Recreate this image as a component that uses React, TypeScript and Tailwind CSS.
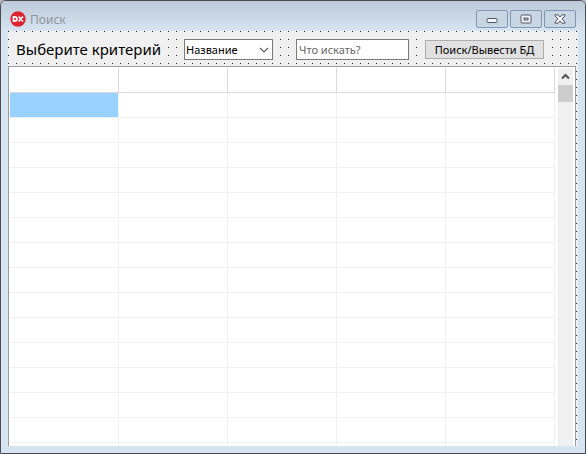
import React from "react";

const ROWS = 15;
const COLS = 5;

function CaptionButton({ label, children }: { label: string; children: React.ReactNode }) {
  return (
    <button
      type="button"
      aria-label={label}
      className="flex h-[18px] w-8 items-center justify-center rounded-[2px] border border-[#8595b4] bg-[#c8d5e3]"
    >
      {children}
    </button>
  );
}

function TitleBar() {
  return (
    <header className="flex h-[30px] shrink-0 items-center bg-linear-to-b from-[#bccad9] to-[#d7e4f1] pt-[6px] pr-[9px] pl-[9px]">
      <svg width="16" height="16" viewBox="0 0 16 16" aria-hidden="true" className="shrink-0">
        <circle cx="8" cy="8" r="7.7" fill="#dc2430" />
        <path
          d="M3.500 5.900v4.200h.9c1.500 0 2.600-.6 2.600-2.100s-1.100-2.100-2.600-2.100zM8.700 5.500l4.300 5M13 5.500l-4.300 5"
          fill="none"
          stroke="#fff"
          strokeWidth="1.700"
        />
      </svg>
      <h1 className="ml-1 flex-1 pt-px text-[12px] leading-4 text-[#8d949c]">Поиск</h1>
      <div className="flex gap-[2px]">
        <CaptionButton label="Свернуть">
          <svg width="12" height="12" viewBox="0 0 12 12" aria-hidden="true">
            <rect x="1" y="5.500" width="10" height="4" rx="1" fill="#f6f6f8" stroke="#505668" />
          </svg>
        </CaptionButton>
        <CaptionButton label="Развернуть">
          <svg width="12" height="10" viewBox="0 0 12 10" aria-hidden="true">
            <rect x="1" y="1" width="10" height="8" rx="1" fill="#f6f6f8" stroke="#505668" />
            <rect x="4" y="4" width="4" height="2" fill="#c4d1e0" stroke="#505668" />
          </svg>
        </CaptionButton>
        <CaptionButton label="Закрыть">
          <svg width="12" height="10" viewBox="0 0 12 10" aria-hidden="true">
            <path
              d="M1 .8h3L6 3 8 .8h3v1L8 5l3 3.200v1H8L6 7 4 9.200H1v-1L4 5 1 1.800z"
              fill="#f6f6f8"
              stroke="#505668"
              strokeLinejoin="round"
            />
          </svg>
        </CaptionButton>
      </div>
    </header>
  );
}

function SearchBar() {
  return (
    <form className="flex h-[35px] shrink-0 items-start pt-2 pl-2" onSubmit={(e) => e.preventDefault()}>
      <label
        htmlFor="criterion"
        className="h-[21px] w-[147px] shrink-0 bg-[#f0f0f0] text-[15px] leading-[21px] whitespace-nowrap text-black"
      >
        Выберите критерий
      </label>
      <div className="relative ml-[21px] shrink-0">
        <select
          id="criterion"
          className="block h-[21px] w-[89px] appearance-none border border-[#7a7a7a] bg-white pl-px text-[11px] leading-[19px] text-black"
        >
          <option>Название</option>
        </select>
        <svg
          width="10"
          height="6"
          viewBox="0 0 10 6"
          aria-hidden="true"
          className="pointer-events-none absolute top-2 right-1"
        >
          <path d="M1 1l4 4 4-4" fill="none" stroke="#555" strokeWidth="1.1" />
        </svg>
      </div>
      <input
        type="text"
        aria-label="Что искать?"
        placeholder="Что искать?"
        className="ml-[23px] h-[21px] w-[113px] shrink-0 border border-[#7a7a7a] bg-white px-[2px] text-[11px] text-black placeholder:text-[#666]"
      />
      <div className="ml-[15px] shrink-0 bg-[#f0f0f0] p-px">
        <button
          type="submit"
          className="block h-[19px] w-[119px] border border-[#adadad] bg-[#e1e1e1] text-[11px] leading-[17px] whitespace-nowrap text-black"
        >
          Поиск/Вывести БД
        </button>
      </div>
    </form>
  );
}

function ResultsTable() {
  return (
    <table className="w-full table-fixed border-separate border-spacing-0">
      <thead>
        <tr>
          {Array.from({ length: COLS }, (_, c) => (
            <th key={c} scope="col" className="h-[25px] border-r border-b border-[#d9d9d9] p-0" />
          ))}
        </tr>
      </thead>
      <tbody>
        {Array.from({ length: ROWS }, (_, r) => (
          <tr key={r}>
            {Array.from({ length: COLS }, (_, c) => (
              <td
                key={c}
                className={
                  r === 0 && c === 0
                    ? "h-[25px] border-r border-b border-[#f0f0f0] bg-[#99d1ff] bg-clip-padding p-0"
                    : "h-[25px] border-r border-b border-[#f0f0f0] p-0"
                }
              />
            ))}
          </tr>
        ))}
      </tbody>
    </table>
  );
}

export default function App() {
  return (
    <div className="h-screen bg-[#b9b9b9] font-['Noto_Sans','Open_Sans',sans-serif]">
      <div className="flex h-full flex-col overflow-hidden rounded-t-[6px] border border-[#4b4a50] bg-[#d7e4f1]">
        <TitleBar />
        <main className="mx-[7px] mb-[7px] flex min-h-0 flex-1 flex-col bg-[#f0f0f0] bg-[conic-gradient(from_270deg_at_1px_1px,#222_90deg,transparent_0)] bg-size-[8px_8px]">
          <SearchBar />
          <section className="mr-[2px] flex min-h-0 flex-1 overflow-hidden border-x border-t border-[#9a9a9a] bg-white pt-px pl-px">
            <div className="mr-[3px] min-w-0 flex-1">
              <ResultsTable />
            </div>
            <div className="mr-[2px] flex w-[15px] flex-col bg-[#f0f0f0]">
              <button type="button" aria-label="Вверх" className="flex h-[17px] items-center justify-center">
                <svg width="9" height="7" viewBox="0 0 9 7" aria-hidden="true">
                  <path d="M1 5.500l3.500-3.500L8 5.500" fill="none" stroke="#505050" strokeWidth="2" />
                </svg>
              </button>
              <div className="h-[17px] bg-[#cdcdcd]" />
            </div>
          </section>
        </main>
      </div>
    </div>
  );
}
